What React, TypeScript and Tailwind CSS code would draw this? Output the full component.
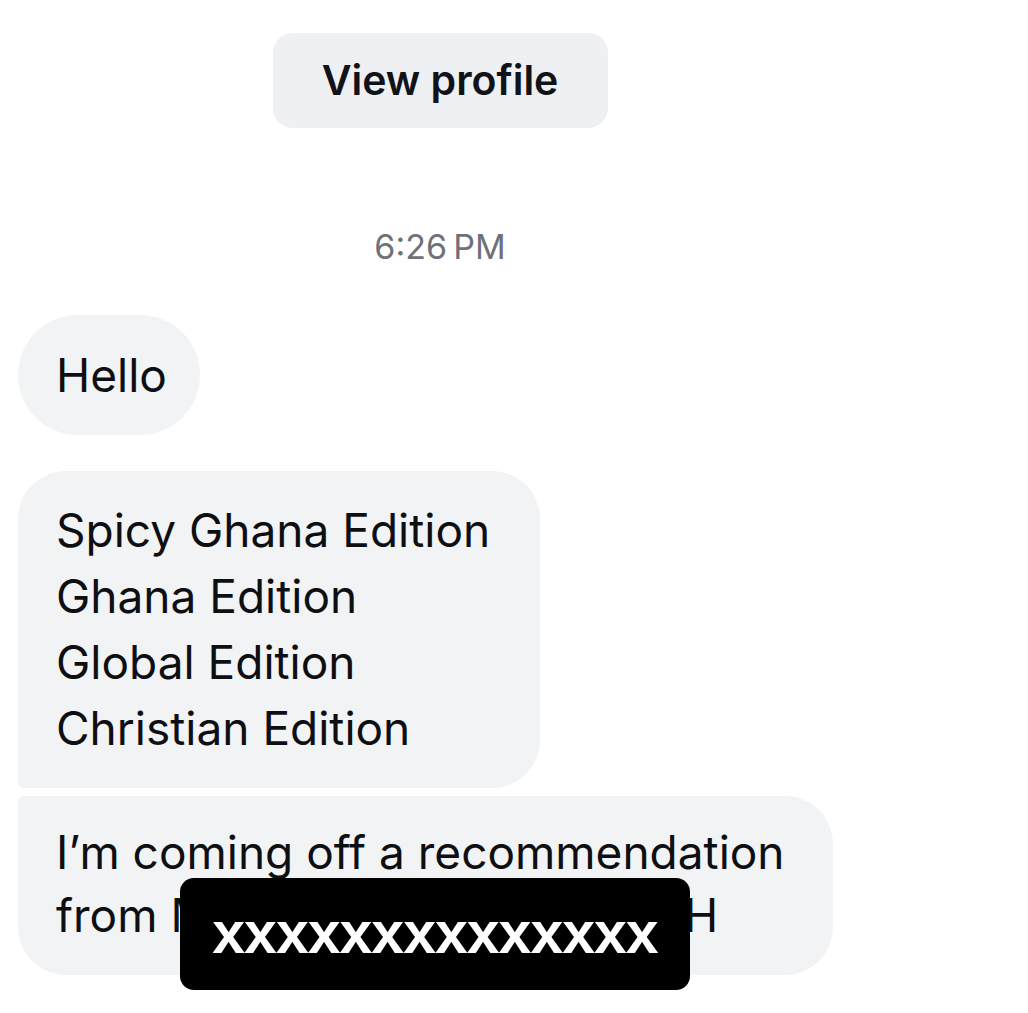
import React from "react";

const font = { fontFamily: "Inter, 'Noto Sans', sans-serif" };

export default function App() {
  return (
    <div className="min-h-[1013px] w-[1028px] bg-white overflow-hidden" style={font}>
      <div className="flex w-[880px] flex-col pt-[33px]">
        <div className="flex justify-center">
          <div className="flex h-[95px] w-[335px] items-center justify-center rounded-[20px] bg-[#eff0f3] text-[41px] font-semibold text-[#111318]">
            View profile
          </div>
        </div>
        <div className="mt-[99px] flex h-[40px] items-center justify-center text-[34px] leading-[40px] text-[#6e7178]">
          6:26{"\u2009"}PM
        </div>
        <div className="mt-[48px] flex flex-col items-start pl-[18px] text-[46px] leading-[66px] text-[#0e0f12]">
          <div className="flex h-[120px] w-[182px] items-center rounded-[60px] bg-[#f2f3f5] pl-[38px]">
            Hello
          </div>
          <div className="mt-[36px] h-[317px] w-[522px] rounded-[48px] rounded-bl-[6px] bg-[#f2f3f5] pl-[38px] pt-[26px]">
            <div>Spicy Ghana Edition</div>
            <div>Ghana Edition</div>
            <div>Global Edition</div>
            <div>Christian Edition</div>
          </div>
          <div className="relative mt-[8px] h-[179px] w-[815px] rounded-[48px] rounded-tl-[6px] bg-[#f2f3f5] pl-[38px] pt-[25px] leading-[63px]">
            <div className="whitespace-nowrap">I’m coming off a recommendation</div>
            <div className="flex whitespace-nowrap">
              <span>from M</span>
              <span className="inline-block w-[472px]" />
              <span>H</span>
            </div>
            <div className="absolute left-[162px] top-[82px] flex h-[112px] w-[510px] items-center justify-center rounded-[14px] bg-black pb-[2px]">
              <span
                className="text-[59px] font-bold leading-none text-white tracking-[-1px]"
                style={{ fontFamily: "'Liberation Sans', Arial, sans-serif" }}
              >
                xxxxxxxxxxxxxx
              </span>
            </div>
          </div>
        </div>
      </div>
    </div>
  );
}
